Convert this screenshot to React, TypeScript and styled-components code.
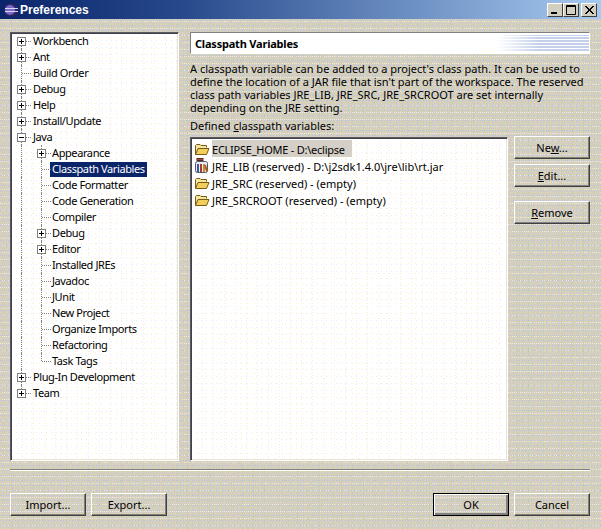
import * as React from "react";
import styled, { createGlobalStyle, css } from "styled-components";

const FACE = "#d2cec0";

// the screenshot was saved with a reduced palette, so the flat greys come out speckled
const dot = (color: string, w: number, h: number) =>
  `radial-gradient(circle at 0.5px 0.5px, ${color} 0.71px, transparent 0.71px) 0 0 / ${w}px ${h}px`;

const faceDither = css`
  background:
    ${dot("#b4c2e8", 3, 5)},
    ${dot("#e2de8e", 5, 3)},
    ${dot("#e8c8cc", 7, 2)},
    ${dot("#eeeae2", 2, 7)},
    ${dot("#bccca4", 11, 3)},
    ${FACE};
`;

const paperDither = css`
  background:
    ${dot("#fff6b8", 7, 5)},
    ${dot("#e6eefc", 5, 7)},
    ${dot("#fbe9ef", 11, 3)},
    #fff;
`;

const GlobalStyle = createGlobalStyle`
  html, body {
    margin: 0;
    padding: 0;
    background: ${FACE};
    overflow: hidden;
  }
`;

const Window = styled.div`
  width: 601px;
  height: 529px;
  display: flex;
  flex-direction: column;
  ${faceDither}
  font-family: "Noto Sans", "Liberation Sans", sans-serif;
  font-size: 11px;
  color: #000;
`;

const TitleBar = styled.div`
  height: 18px;
  padding: 1px 4px 0 3px;
  display: flex;
  align-items: center;
  background: linear-gradient(90deg, #0a246a 0%, #27498c 30%, #a6caf0 100%);
`;

const TitleText = styled.div`
  margin-left: 1px;
  flex: 1;
  font-family: "Liberation Sans", sans-serif;
  font-weight: bold;
  font-size: 12px;
  color: #fff;
`;

const CtrlButton = styled.div<{ $gap?: number }>`
  width: 16px;
  height: 14px;
  margin-left: ${(p) => p.$gap ?? 0}px;
  box-sizing: border-box;
  display: flex;
  background: ${FACE};
  border: 1px solid;
  border-color: #fff #404040 #404040 #fff;
  svg {
    display: block;
  }
`;

const Main = styled.div`
  margin: 13px 11px 0 10px;
  height: 429px;
  display: grid;
  grid-template-columns: 169px 400px;
  column-gap: 11px;
`;

const sunken = css`
  box-sizing: border-box;
  ${paperDither}
  border: 1px solid;
  border-color: #5a5a62 #fff #fff #5a5a62;
  box-shadow: inset 1px 1px 0 #404048, inset -1px -1px 0 #e8e4d8;
`;

const TreePanel = styled.div`
  ${sunken}
  padding: 0 0 0 6px;
  letter-spacing: -0.4px;
`;

const Row = styled.div`
  height: 16px;
  display: flex;
  align-items: center;
  white-space: nowrap;
`;

const Guide = styled.div`
  position: relative;
  width: 20px;
  height: 16px;
  flex: none;
  &::before {
    content: "";
    position: absolute;
    left: 4px;
    top: 0;
    bottom: 0;
    border-left: 1px dotted #808080;
  }
`;

const Slot = styled.div<{ $first?: boolean; $last?: boolean }>`
  position: relative;
  width: 14px;
  height: 16px;
  flex: none;
  &::before {
    content: "";
    position: absolute;
    left: 4px;
    top: ${(p) => (p.$first ? 8 : 0)}px;
    bottom: ${(p) => (p.$last ? 8 : 0)}px;
    border-left: 1px dotted #808080;
  }
  &::after {
    content: "";
    position: absolute;
    left: 5px;
    right: 0;
    top: 8px;
    border-top: 1px dotted #808080;
  }
`;

const Expander = styled.div`
  position: absolute;
  z-index: 1;
  left: 0;
  top: 4px;
  width: 9px;
  height: 9px;
  box-sizing: border-box;
  background: #fff;
  border: 1px solid #808080;
  svg {
    display: block;
  }
`;

const TreeLabel = styled.div<{ $depth: number; $selected?: boolean }>`
  margin-left: ${(p) => (p.$depth ? -1 : 0)}px;
  padding: 0 2px;
  height: 15px;
  line-height: 13px;
  background: ${(p) => (p.$selected ? "#0a246a" : "transparent")};
  color: ${(p) => (p.$selected ? "#fff" : "#000")};
`;

const Side = styled.div`
  min-width: 0;
  display: flex;
  flex-direction: column;
`;

const Header = styled.div`
  height: 22px;
  box-sizing: border-box;
  padding-left: 4px;
  display: flex;
  align-items: center;
  background: #fff;
  border: 1px solid;
  border-color: #808080 #fff #fff #808080;
  font-weight: bold;
  font-size: 11px;
  letter-spacing: -0.2px;
`;

const HeaderTitle = styled.div`
  flex: 1;
`;

const HeaderFade = styled.div`
  width: 92px;
  align-self: stretch;
  margin: 2px 0;
  background: repeating-linear-gradient(0deg, #c4d0ea 0 2px, #fff 2px 3px);
  mask-image: linear-gradient(90deg, transparent 0%, #000 45%);
`;

const Description = styled.div`
  margin-top: 8px;
  line-height: 13px;
  white-space: nowrap;
`;

const ListCaption = styled.div`
  margin-top: 5px;
  line-height: 13px;
`;

const ListArea = styled.div`
  margin-top: 5px;
  flex: 1;
  min-height: 0;
  display: flex;
  gap: 6px;
`;

const List = styled.div`
  ${sunken}
  width: 318px;
  padding: 2px 0 0 3px;
`;

const ListRow = styled.div`
  height: 17px;
  display: flex;
  align-items: center;
  white-space: nowrap;
`;

const ListIcon = styled.svg`
  width: 16px;
  height: 16px;
  flex: none;
  margin-right: 2px;
`;

const ListText = styled.div<{ $selected?: boolean }>`
  height: 17px;
  box-sizing: border-box;
  padding-top: 1px;
  line-height: 17px;
  padding-right: ${(p) => (p.$selected ? 7 : 0)}px;
  letter-spacing: ${(p) => (p.$selected ? -0.24 : 0)}px;
  background: ${(p) => (p.$selected ? "#d4d0c8" : "transparent")};
`;

const ButtonColumn = styled.div`
  width: 76px;
  margin-top: -1px;
  display: flex;
  flex-direction: column;
`;

const Button = styled.div<{ $isDefault?: boolean; $top?: number }>`
  width: 76px;
  height: 23px;
  flex: none;
  margin-top: ${(p) => p.$top ?? 0}px;
  box-sizing: border-box;
  display: flex;
  align-items: center;
  justify-content: center;
  border: 1px solid;
  border-color: #fff #404040 #404040 #fff;
  box-shadow: inset -1px -1px 0 #808080;
  ${(p) =>
    p.$isDefault &&
    css`
      border-color: #000;
      box-shadow: inset 1px 1px 0 #fff, inset -2px -2px 0 #808080;
    `}
`;

const Separator = styled.div`
  margin: 8px 11px 0 10px;
  height: 2px;
  box-sizing: border-box;
  border-top: 1px solid #808080;
  border-bottom: 1px solid #fff;
`;

const Footer = styled.div`
  margin: 22px 11px 0 10px;
  display: flex;
  gap: 5px;
`;

const Spacer = styled.div`
  flex: 1;
`;

type TreeNode = { label: string; expander?: "+" | "-"; selected?: boolean; children?: TreeNode[] };

const tree: TreeNode[] = [
  { label: "Workbench", expander: "+" },
  { label: "Ant", expander: "+" },
  { label: "Build Order" },
  { label: "Debug", expander: "+" },
  { label: "Help", expander: "+" },
  { label: "Install/Update", expander: "+" },
  {
    label: "Java",
    expander: "-",
    children: [
      { label: "Appearance", expander: "+" },
      { label: "Classpath Variables", selected: true },
      { label: "Code Formatter" },
      { label: "Code Generation" },
      { label: "Compiler" },
      { label: "Debug", expander: "+" },
      { label: "Editor", expander: "+" },
      { label: "Installed JREs" },
      { label: "Javadoc" },
      { label: "JUnit" },
      { label: "New Project" },
      { label: "Organize Imports" },
      { label: "Refactoring" },
      { label: "Task Tags" },
    ],
  },
  { label: "Plug-In Development", expander: "+" },
  { label: "Team", expander: "+" },
];

function ExpanderBox({ kind }: { kind: "+" | "-" }) {
  return (
    <Expander>
      <svg width="7" height="7" viewBox="0 0 7 7">
        <rect x="1" y="3" width="5" height="1" fill="#000" />
        {kind === "+" && <rect x="3" y="1" width="1" height="5" fill="#000" />}
      </svg>
    </Expander>
  );
}

function TreeRows({ nodes, depth }: { nodes: TreeNode[]; depth: number }) {
  return (
    <>
      {nodes.map((n, i) => (
        <React.Fragment key={n.label + depth}>
          <Row>
            {depth > 0 && <Guide />}
            <Slot $first={depth === 0 && i === 0} $last={i === nodes.length - 1}>
              {n.expander && <ExpanderBox kind={n.expander} />}
            </Slot>
            <TreeLabel $depth={depth} $selected={n.selected}>
              {n.label}
            </TreeLabel>
          </Row>
          {n.children && <TreeRows nodes={n.children} depth={depth + 1} />}
        </React.Fragment>
      ))}
    </>
  );
}

function FolderIcon() {
  return (
    <ListIcon viewBox="0 0 16 16">
      <path d="M1.5 13.5V4.5L2.5 3.5H6L7 4.5H12.5V6.5" fill="#f5e6a0" stroke="#7a5c10" />
      <path d="M1.5 13.5L4 7.5H15L12.5 13.5Z" fill="#f2cf5c" stroke="#7a5c10" />
    </ListIcon>
  );
}

function JarIcon() {
  return (
    <ListIcon viewBox="0 0 16 16">
      <rect x="3" y="0.5" width="6" height="2" fill="#a8483c" stroke="#5a2a20" />
      <rect x="1.5" y="3.5" width="12" height="11" rx="2" fill="#e8eef8" stroke="#50586c" />
      <rect x="3" y="6" width="2" height="8" fill="#3c5aa8" />
      <rect x="6" y="6" width="2" height="8" fill="#a83c30" />
      <rect x="9" y="6" width="2" height="8" fill="#c89030" />
      <path d="M11 7L13 13.5" stroke="#a86020" strokeWidth="2" />
    </ListIcon>
  );
}

function EclipseIcon() {
  return (
    <svg width="16" height="16" viewBox="0 0 16 16">
      <circle cx="8" cy="8" r="7" fill="#2a2560" />
      <circle cx="7" cy="8" r="5" fill="#7a6ac8" />
      <rect x="2" y="6" width="13" height="1" fill="#d8d4f0" />
      <rect x="2" y="9" width="13" height="1" fill="#d8d4f0" />
    </svg>
  );
}

export default function App() {
  return (
    <Window>
      <GlobalStyle />
      <TitleBar>
        <EclipseIcon />
        <TitleText>Preferences</TitleText>
        <CtrlButton>
          <svg width="14" height="12" viewBox="0 0 14 12">
            <rect x="3" y="8" width="6" height="2" fill="#000" />
          </svg>
        </CtrlButton>
        <CtrlButton>
          <svg width="14" height="12" viewBox="0 0 14 12">
            <path d="M2.5 1.5H11.5V10.5H2.5Z M2 2.5H12" fill="none" stroke="#000" />
          </svg>
        </CtrlButton>
        <CtrlButton $gap={2}>
          <svg width="14" height="12" viewBox="0 0 14 12">
            <path d="M3 2L11 10M4 2L12 10M11 2L3 10M12 2L4 10" stroke="#000" />
          </svg>
        </CtrlButton>
      </TitleBar>
      <Main>
        <TreePanel>
          <TreeRows nodes={tree} depth={0} />
        </TreePanel>
        <Side>
          <Header>
            <HeaderTitle>Classpath Variables</HeaderTitle>
            <HeaderFade />
          </Header>
          <Description>
            A classpath variable can be added to a project's class path. It can be used to
            <br />
            define the location of a JAR file that isn't part of the workspace. The reserved
            <br />
            class path variables JRE_LIB, JRE_SRC, JRE_SRCROOT are set internally
            <br />
            depending on the JRE setting.
          </Description>
          <ListCaption>
            Defined <u>c</u>lasspath variables:
          </ListCaption>
          <ListArea>
            <List>
              <ListRow>
                <FolderIcon />
                <ListText $selected>ECLIPSE_HOME - D:\eclipse</ListText>
              </ListRow>
              <ListRow>
                <JarIcon />
                <ListText>JRE_LIB (reserved) - D:\j2sdk1.4.0\jre\lib\rt.jar</ListText>
              </ListRow>
              <ListRow>
                <FolderIcon />
                <ListText>JRE_SRC (reserved) - (empty)</ListText>
              </ListRow>
              <ListRow>
                <FolderIcon />
                <ListText>JRE_SRCROOT (reserved) - (empty)</ListText>
              </ListRow>
            </List>
            <ButtonColumn>
              <Button>
                <span>
                  Ne<u>w</u>...
                </span>
              </Button>
              <Button $top={5}>
                <span>
                  <u>E</u>dit...
                </span>
              </Button>
              <Button $top={14}>
                <span>
                  <u>R</u>emove
                </span>
              </Button>
            </ButtonColumn>
          </ListArea>
        </Side>
      </Main>
      <Separator />
      <Footer>
        <Button>Import...</Button>
        <Button>Export...</Button>
        <Spacer />
        <Button $isDefault>OK</Button>
        <Button>Cancel</Button>
      </Footer>
    </Window>
  );
}
